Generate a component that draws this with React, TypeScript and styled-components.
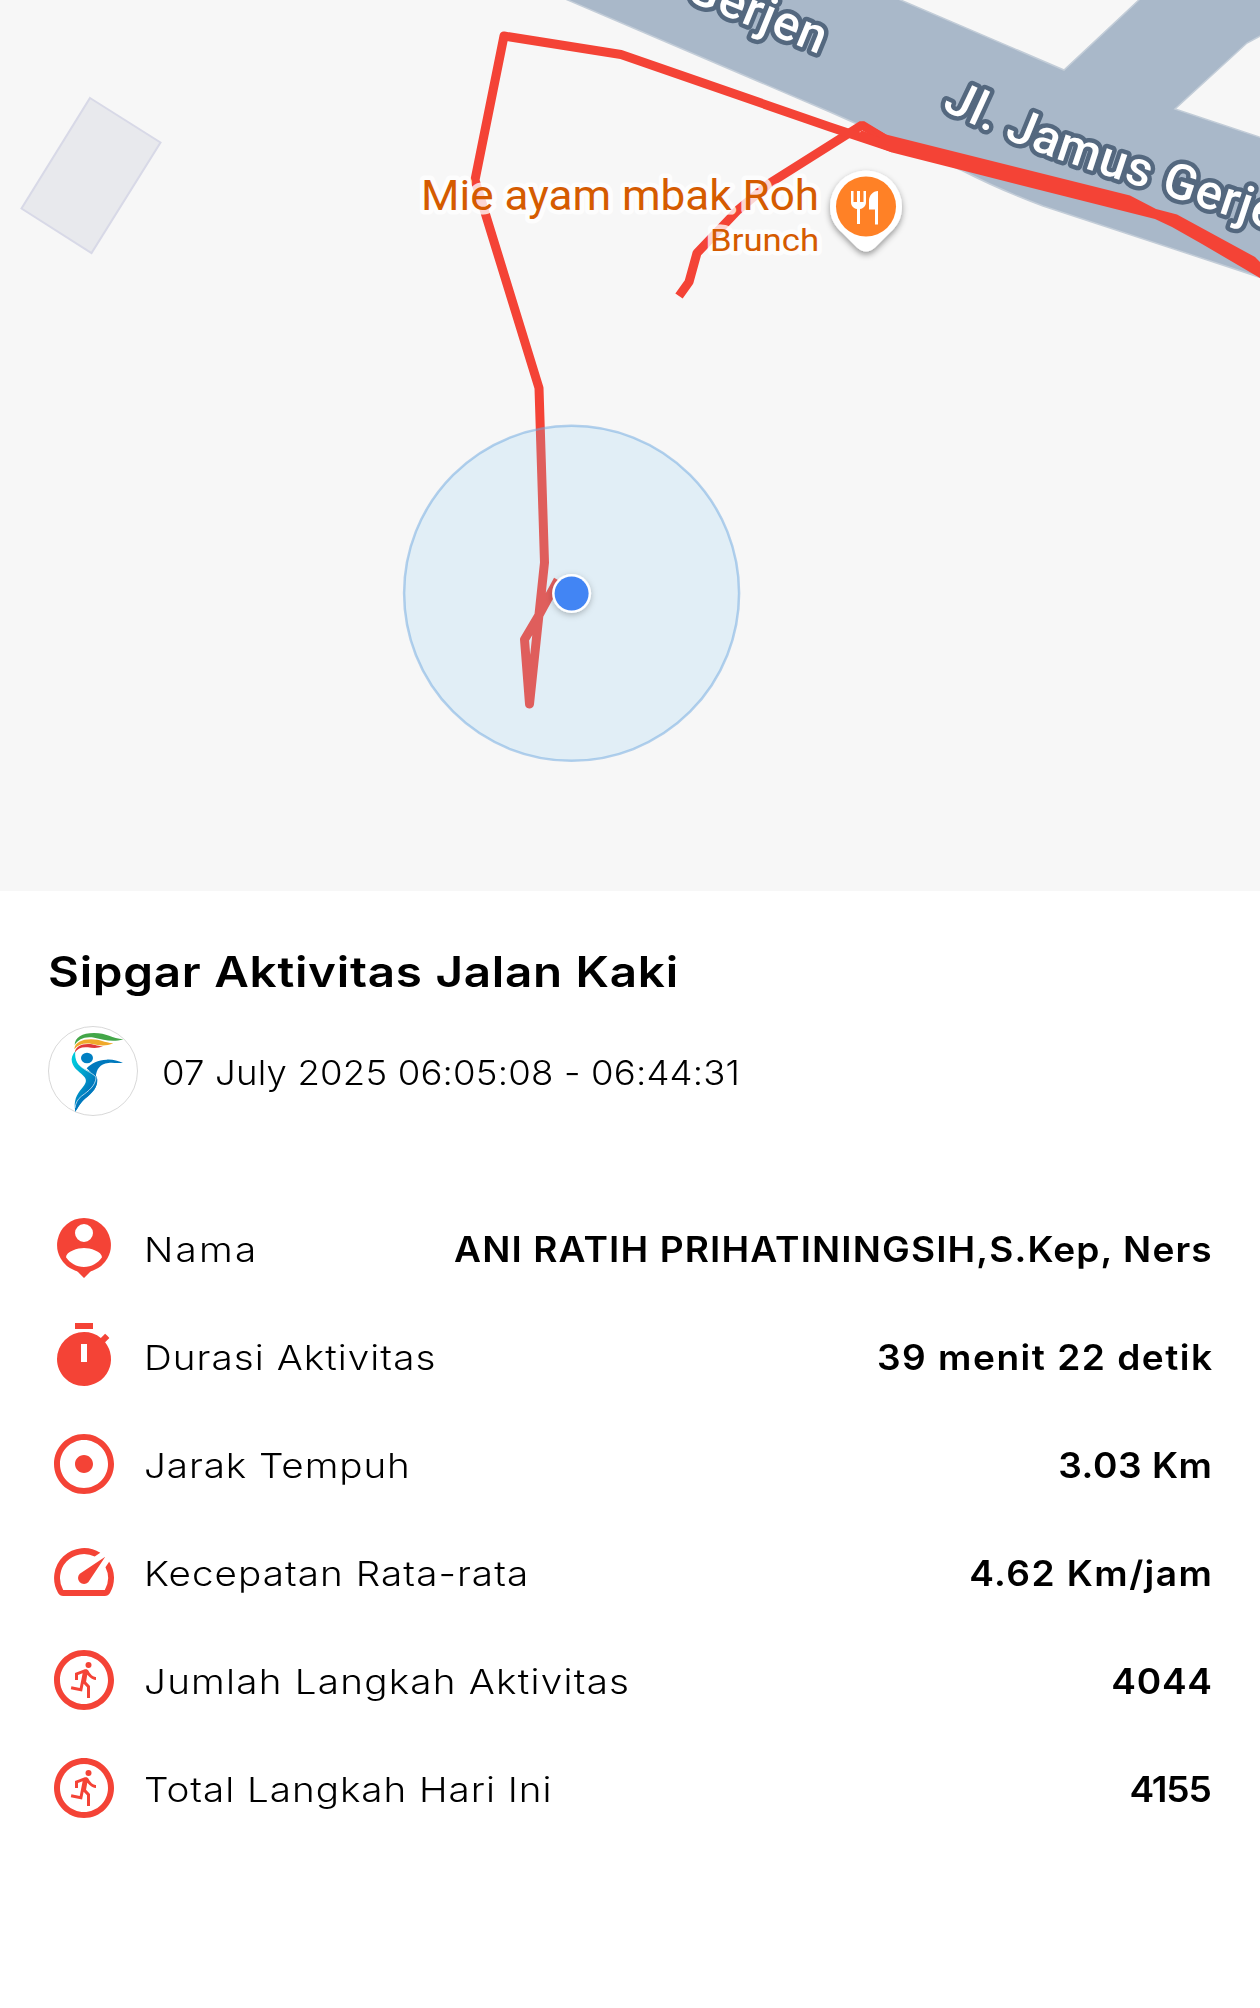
import React from 'react';
import { MdAdjust, MdOutlineRunCircle, MdSpeed, MdTimer } from 'react-icons/md';
import styled, { createGlobalStyle } from 'styled-components';

const colors = {
	accent: '#f44336',
	black: '#000000',
	white: '#ffffff',
	land: '#f7f7f7',
	road: '#a9b8c9',
	roadText: '#54687f',
	poi: '#d55b00',
};

const GlobalStyle = createGlobalStyle`
	body {
		margin: 0;
		background-color: ${colors.white};
	}
`;

const Page = styled.div`
	width: 1260px;
	height: 2008px;
	overflow: hidden;
	background-color: ${colors.white};
	color: ${colors.black};
	font-family: Inter, 'Liberation Sans', sans-serif;
`;

const MapCanvas = styled.svg`
	display: block;
	width: 1260px;
	height: 891px;
	background-color: ${colors.land};
`;

const RoadName = styled.text`
	font-family: Roboto, sans-serif;
	font-size: 49px;
	font-weight: 500;
	letter-spacing: 0.8px;
	fill: ${colors.white};
	stroke: ${colors.roadText};
	stroke-width: 9px;
	stroke-linejoin: round;
	paint-order: stroke;
`;

const PlaceName = styled.text<{ size: number }>`
	font-family: Roboto, sans-serif;
	font-size: ${({ size }) => size}px;
	fill: ${colors.poi};
	stroke: rgba(255, 255, 255, 0.8);
	stroke-width: 9px;
	stroke-linejoin: round;
	paint-order: stroke;
`;

const Details = styled.section`
	padding: 51px 48px 0;
`;

const Title = styled.h1`
	margin: 0;
	font-size: 42.5px;
	font-weight: 600;
	line-height: 60px;
	letter-spacing: 0.65px;
	white-space: nowrap;
	transform: scaleX(1.12);
	transform-origin: left center;
`;

const Schedule = styled.div`
	display: flex;
	align-items: center;
	gap: 24px;
	margin-top: 24px;
`;

const Avatar = styled.svg`
	width: 90px;
	height: 90px;
	flex: none;
`;

const Label = styled.span<{ spacing: number; stretch?: number }>`
	padding-top: 3px;
	font-size: 34.5px;
	font-weight: 300;
	line-height: 44px;
	white-space: nowrap;
	letter-spacing: ${({ spacing }) => spacing}px;
	transform: scaleX(${({ stretch = 1.12 }) => stretch});
	transform-origin: left center;
`;

const Stats = styled.div`
	margin-top: 78px;
`;

const Row = styled.div`
	display: flex;
	align-items: center;
	height: 108px;
`;

const Icon = styled.div`
	display: flex;
	flex: none;
	width: 72px;
	height: 72px;
	margin-right: 24px;
	color: ${colors.accent};
	svg {
		width: 100%;
		height: 100%;
	}
`;

const Value = styled.span<{ spacing: number }>`
	margin-left: auto;
	margin-right: ${({ spacing }) => -spacing}px;
	padding-top: 2px;
	font-size: 35px;
	font-weight: 600;
	line-height: 44px;
	white-space: nowrap;
	letter-spacing: ${({ spacing }) => spacing}px;
	transform: scaleX(1.06);
	transform-origin: right center;
`;

const PersonIcon = () => (
	<svg viewBox="0 0 24 24" fill="currentColor">
		<path
			fillRule="evenodd"
			d="M12 2a9 9 0 0 0-3.2 17.4c.5.2.9.3 1.2.6l2 2 2-2c.3-.3.7-.4 1.2-.6A9 9 0 0 0 12 2zm0 2a3 3 0 1 1 0 6 3 3 0 0 1 0-6zm0 14.3c-2.5 0-4.71-1.28-6-3.22.03-1.99 4-3.08 6-3.08s5.97 1.09 6 3.08c-1.29 1.94-3.5 3.22-6 3.22z"
		/>
	</svg>
);

const Logo = () => (
	<Avatar viewBox="54 288 270 270">
		<defs>
			<linearGradient id="body" x1="130" y1="400" x2="200" y2="440" gradientUnits="userSpaceOnUse">
				<stop offset="0" stopColor="#00c8dc" />
				<stop offset="1" stopColor="#0079bd" />
			</linearGradient>
		</defs>
		<circle cx="189" cy="423" r="133.5" fill="#fff" stroke="#c4c4c4" strokeWidth="2" />
		<path fill="#43a648" d="M134 345c0-22 22-36 58-36 38 0 54 16 88 19-34 10-60 1-87-5-28-5-48 4-59 22z" />
		<path fill="#f0a92b" d="M133 358c1-20 22-30 50-30 29 0 38 10 67 12-24 10-44 6-64 2-25-4-42 2-53 16z" />
		<path fill="#e0383a" d="M134 368c2-17 18-26 40-26 18 0 25 6 45 7-17 7-32 5-45 3-19-2-30 3-40 16z" />
		<path fill="url(#body)" d="M136 364c-3 26 7 43 29 54 20 10 36 14 37 31 1 24-17 38-38 58-13 13-18 23-28 38-6-34 4-51 20-70 12-15 15-22 8-33-12-15-32-23-38-45-3-13 1-23 10-33z" />
		<path fill="#0079bd" d="M170 415c14-15 34-25 60-26 20-1 32 4 49 9-18 3-29-1-44 1-26 3-35 18-38 42z" />
		<path fill="#0079bd" d="M199 443c7 28-10 44-35 64-14 13-18 23-28 38-3-17 1-29 12-41 23-18 45-35 51-61z" />
		<path fill="none" stroke="#fff" strokeWidth="2" d="M141 375c-4 24 9 34 26 45 17 10 31 17 31 24-2 23-22 39-43 54-12 9-18 21-20 36" />
		<ellipse cx="171" cy="384" rx="18" ry="16" fill="#007fc2" />
	</Avatar>
);

const ActivityMap = () => (
	<MapCanvas viewBox="0 0 1260 891">
		<defs>
			<path id="road-west" d="M620 -27L820 54.500" />
			<path id="road-east" d="M941 109Q1000 138 1060 160L1320 246" />
			<filter id="shadow" x="-30%" y="-30%" width="160%" height="160%">
				<feDropShadow dx="0" dy="3" stdDeviation="3" floodOpacity="0.4" />
			</filter>
			<filter id="dot-shadow" x="-30%" y="-30%" width="160%" height="160%">
				<feDropShadow dx="0" dy="2" stdDeviation="3" floodOpacity="0.25" />
			</filter>
		</defs>

		<path d="M90 98L160.500 142.500L91.500 253L21.500 208.500Z" fill="#e8e9ed" stroke="#d8d9e7" strokeWidth="2" />
		<path
			d="M563 -2L830 112L963 171Q1000 190 1043 206L1262 278V138L1175 109L1247 43L1262 35V-2H1141L1064 70L896 -2Z"
			fill={colors.road}
			stroke="#c3cdd8"
			strokeWidth="1.5"
		/>

		<g fill="none" stroke={colors.accent} strokeWidth="9" strokeLinejoin="bevel">
			<path d="M679 296L689 282L697 253L738 210L770 183L862 125L890 142" />
			<path
				strokeLinejoin="round"
				d="M893 148L830 127L621 54.500L504 36L475 180L539 388L544.500 562.500L529.500 704L524.500 639.500L539 615L558 580"
			/>
		</g>
		<path
			d="M862 121L886 134.500L1130 195.500L1156 209L1177 214.500L1255 257L1260 262V278L1202 244L1172 227L1155 219L963 170.500L892 152.500L858 139L861 130L880 138Z"
			fill={colors.accent}
		/>

		<RoadName>
			<textPath href="#road-west" startOffset="100%" textAnchor="end">
				Gerjen
			</textPath>
		</RoadName>
		<RoadName>
			<textPath href="#road-east">Jl. Jamus Gerjen</textPath>
		</RoadName>

		<PlaceName size={42.5} x="421" y="210" textLength="398" lengthAdjust="spacingAndGlyphs">
			Mie ayam mbak Roh
		</PlaceName>
		<PlaceName size={32} x="710" y="251" textLength="109" lengthAdjust="spacingAndGlyphs">
			Brunch
		</PlaceName>

		<path
			filter="url(#shadow)"
			fill={colors.white}
			d="M866 170.500a36 36 0 0 0-36 36c0 12 5 20 12 26l15 15q9 8 18 0l15-15c7-6 12-14 12-26a36 36 0 0 0-36-36z"
		/>
		<circle cx="866" cy="206.500" r="30" fill="#ff8126" />
		<path
			fill={colors.white}
			d="M851 191h2.500v11h3.500v-11h3v11h3.500v-11h2.500v11c0 4-2.500 6.500-6 7v15h-3v-15c-3.500-.5-6-3-6-7zM878 191v33.500h-3v-15h-6v-9c0-5 4-9.500 9-9.500z"
		/>

		<circle cx="571.600" cy="593.300" r="167.500" fill="rgba(142, 205, 246, 0.2)" stroke="#6ea8e0" strokeOpacity="0.5" strokeWidth="2.500" />
		<circle cx="571.600" cy="593.500" r="19.500" fill={colors.white} filter="url(#dot-shadow)" />
		<circle cx="571.600" cy="593.500" r="17" fill="#4285f4" />
	</MapCanvas>
);

const stats = [
	{ icon: <PersonIcon />, label: 'Nama', value: 'ANI RATIH PRIHATININGSIH,S.Kep, Ners', labelSpacing: 2, valueSpacing: 1.05 },
	{ icon: <MdTimer />, label: 'Durasi Aktivitas', value: '39 menit 22 detik', labelSpacing: 0.92, valueSpacing: 1.4 },
	{ icon: <MdAdjust />, label: 'Jarak Tempuh', value: '3.03 Km', labelSpacing: 0.8, valueSpacing: 0.5 },
	{ icon: <MdSpeed />, label: 'Kecepatan Rata-rata', value: '4.62 Km/jam', labelSpacing: 0.93, valueSpacing: 1.35 },
	{ icon: <MdOutlineRunCircle />, label: 'Jumlah Langkah Aktivitas', value: '4044', labelSpacing: 1.09, valueSpacing: 0.7 },
	{ icon: <MdOutlineRunCircle />, label: 'Total Langkah Hari Ini', value: '4155', labelSpacing: 0.85, valueSpacing: -1.1 },
];

const App = () => (
	<Page>
		<GlobalStyle />
		<ActivityMap />
		<Details>
			<Title>Sipgar Aktivitas Jalan Kaki</Title>
			<Schedule>
				<Logo />
				<Label spacing={0.15} stretch={1.06}>
					07 July 2025 06:05:08 - 06:44:31
				</Label>
			</Schedule>
			<Stats>
				{stats.map((item) => (
					<Row key={item.label}>
						<Icon>{item.icon}</Icon>
						<Label spacing={item.labelSpacing}>{item.label}</Label>
						<Value spacing={item.valueSpacing}>{item.value}</Value>
					</Row>
				))}
			</Stats>
		</Details>
	</Page>
);

export default App;
